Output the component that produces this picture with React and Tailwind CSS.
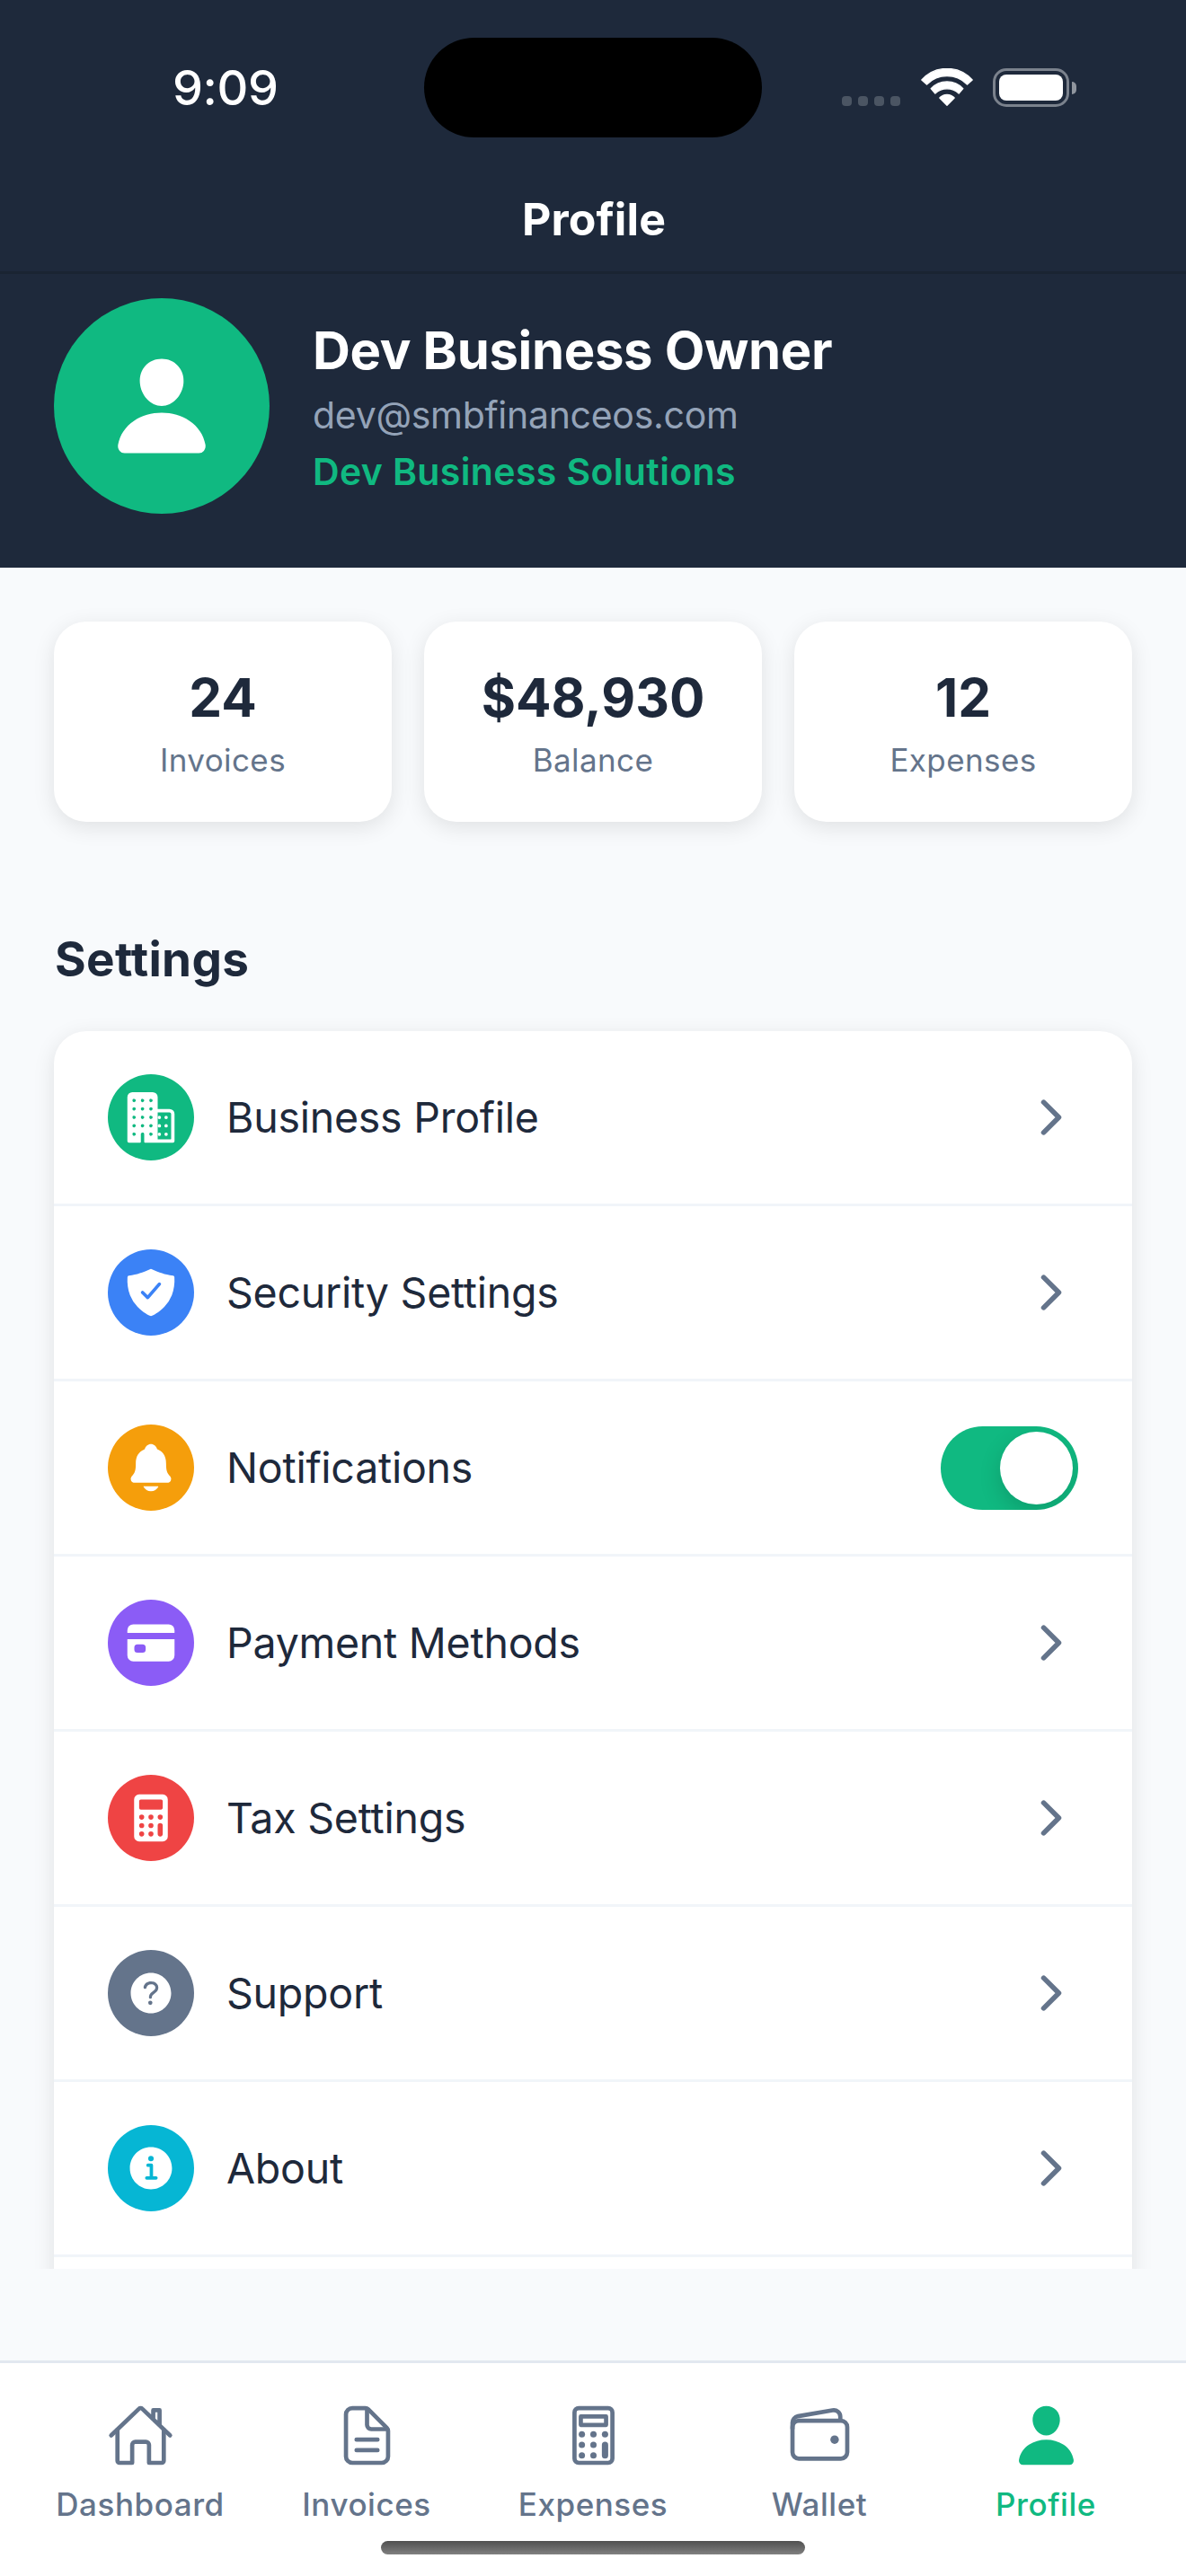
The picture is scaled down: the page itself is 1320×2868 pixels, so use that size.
import {
  IoBusiness,
  IoCalculator,
  IoCalculatorOutline,
  IoCard,
  IoChevronForward,
  IoDocumentTextOutline,
  IoHelpCircle,
  IoHomeOutline,
  IoInformationCircle,
  IoNotifications,
  IoPerson,
  IoShieldCheckmark,
  IoWalletOutline,
} from "react-icons/io5";

const stats = [
  { value: "24", label: "Invoices" },
  { value: "$48,930", label: "Balance" },
  { value: "12", label: "Expenses" },
];

const settings = [
  { label: "Business Profile", icon: IoBusiness, color: "bg-[#10b981]" },
  { label: "Security Settings", icon: IoShieldCheckmark, color: "bg-[#3b82f6]" },
  { label: "Notifications", icon: IoNotifications, color: "bg-[#f59e0b]", toggle: true },
  { label: "Payment Methods", icon: IoCard, color: "bg-[#8b5cf6]" },
  { label: "Tax Settings", icon: IoCalculator, color: "bg-[#ef4444]" },
  { label: "Support", icon: IoHelpCircle, color: "bg-[#64748b]" },
  { label: "About", icon: IoInformationCircle, color: "bg-[#06b6d4]" },
];

const tabs = [
  { label: "Dashboard", icon: IoHomeOutline },
  { label: "Invoices", icon: IoDocumentTextOutline },
  { label: "Expenses", icon: IoCalculatorOutline },
  { label: "Wallet", icon: IoWalletOutline },
  { label: "Profile", icon: IoPerson, active: true },
];

function WifiIcon() {
  return (
    <svg viewBox="0 0 173 126" className="ml-[23px] h-[42px] w-[58px]" fill="white" stroke="white" strokeWidth="4" strokeLinejoin="round">
      <path d="M2 39A113.4 113.4 0 0 1 171 39L154 54A95 95 0 0 0 19 54Z" />
      <path d="M33 68A73 73 0 0 1 140 68L126 84A58 58 0 0 0 47 84Z" />
      <path d="M62 99A33 33 0 0 1 111 99L86.5 124Z" />
    </svg>
  );
}

function StatusBar() {
  return (
    <div className="grid h-[186px] grid-cols-[472px_376px_1fr] items-center pt-2">
      <span className="pl-[192px] pt-[2px] text-[54px] leading-none font-medium tracking-[-0.4px]">9:09</span>
      <span className="h-[111px] rounded-full bg-black" />
      <div className="flex h-[43px] items-end pl-[89px]">
        <div className="mb-px flex gap-[7px]">
          {[0, 1, 2, 3].map((dot) => (
            <span key={dot} className="size-[11px] rounded-[4px] bg-[#4b5563]" />
          ))}
        </div>
        <div className="self-start">
          <WifiIcon />
        </div>
        <div className="ml-[22px] h-[43px] w-[85px] rounded-[15px] border-[3px] border-[#7b828d] p-1">
          <div className="h-full rounded-[8px] bg-white" />
        </div>
        <span className="mb-[14px] ml-[3px] h-[14px] w-[5px] rounded-r-full bg-[#8f959e]" />
      </div>
    </div>
  );
}

function Header() {
  return (
    <header className="bg-[#1e293b] text-white">
      <StatusBar />
      <div className="flex h-[119px] items-center justify-center border-b-[3px] border-[#1a2432]">
        <h1 className="pl-[2px] text-[50px] leading-none font-bold tracking-[0.1px]">Profile</h1>
      </div>
      <div className="flex items-center px-[60px] pt-[27px] pb-[60px]">
        <div className="flex size-[240px] items-center justify-center rounded-full bg-[#10b981]">
          <IoPerson className="size-[120px]" />
        </div>
        <div className="ml-12 flex flex-col">
          <span className="text-[58px] leading-[72px] font-bold tracking-[-0.33px]">Dev Business Owner</span>
          <span className="mt-[11px] text-[41px] leading-[50px] tracking-[-0.29px] text-[#94a3b8]">dev@smbfinanceos.com</span>
          <span className="mt-[13px] text-[41px] leading-[50px] font-semibold tracking-[0.37px] text-[#10b981]">
            Dev Business Solutions
          </span>
        </div>
      </div>
    </header>
  );
}

function StatCard({ value, label }) {
  return (
    <div className="flex flex-1 flex-col items-center rounded-[36px] bg-white pt-[49px] pb-[47px] shadow-[0_6px_24px_rgba(0,0,0,0.1)]">
      <span className="text-[58.5px] leading-[72px] font-bold">{value}</span>
      <span className="mt-[11px] text-[35px] leading-[44px] tracking-[0.4px] text-[#64748b]">{label}</span>
    </div>
  );
}

function Toggle() {
  return (
    <div className="flex h-[93px] w-[153px] items-center justify-end overflow-hidden rounded-full bg-[#10b981] pr-[6px]">
      <span className="size-[81px] rounded-full bg-white shadow-[0_9px_24px_rgba(0,0,0,0.15)]" />
    </div>
  );
}

function SettingRow({ label, icon: Icon, color, toggle }) {
  return (
    <div className="flex h-[195px] items-center border-b-[3px] border-[#f1f5f9] px-[60px]">
      <span className={`flex size-24 items-center justify-center rounded-full text-white ${color}`}>
        <Icon className="size-[60px]" />
      </span>
      <span className="ml-9 flex-1 pt-[2px] text-[46.5px] tracking-[-0.25px]">{label}</span>
      {toggle ? <Toggle /> : <IoChevronForward className="size-[60px] text-[#64748b]" />}
    </div>
  );
}

function TabBar() {
  return (
    <nav className="h-[240px] border-t-[3px] border-[#e2e8f0] bg-white px-[30px]">
      <div className="grid grid-cols-5 pt-[43px]">
        {tabs.map(({ label, icon: Icon, active }) => (
          <div key={label} className={`flex flex-col items-center ${active ? "text-[#10b981]" : "text-[#64748b]"}`}>
            <Icon className="size-[75px]" />
            <span className="mt-[17px] text-[35px] leading-[44px] font-medium tracking-[0.55px]">{label}</span>
          </div>
        ))}
      </div>
      <div className="mx-auto mt-[19px] h-[15px] w-[472px] rounded-full bg-linear-to-b from-[#505050] to-[#808080]" />
    </nav>
  );
}

export default function App() {
  return (
    <div className="flex h-[2868px] w-[1320px] flex-col overflow-hidden bg-[#f8fafc] font-['Inter',sans-serif] text-[#1e293b]">
      <Header />
      <main className="h-[1894px] overflow-hidden px-[60px] pt-[60px]">
        <section className="flex gap-9">
          {stats.map((stat) => (
            <StatCard key={stat.label} {...stat} />
          ))}
        </section>
        <h2 className="mt-[121px] mb-12 pl-px text-[53px] leading-[64px] font-bold tracking-[0.3px]">Settings</h2>
        <section className="rounded-[36px] bg-white pb-[195px] shadow-[0_6px_24px_rgba(0,0,0,0.1)]">
          {settings.map((item) => (
            <SettingRow key={item.label} {...item} />
          ))}
        </section>
      </main>
      <div className="flex-1" />
      <TabBar />
    </div>
  );
}
